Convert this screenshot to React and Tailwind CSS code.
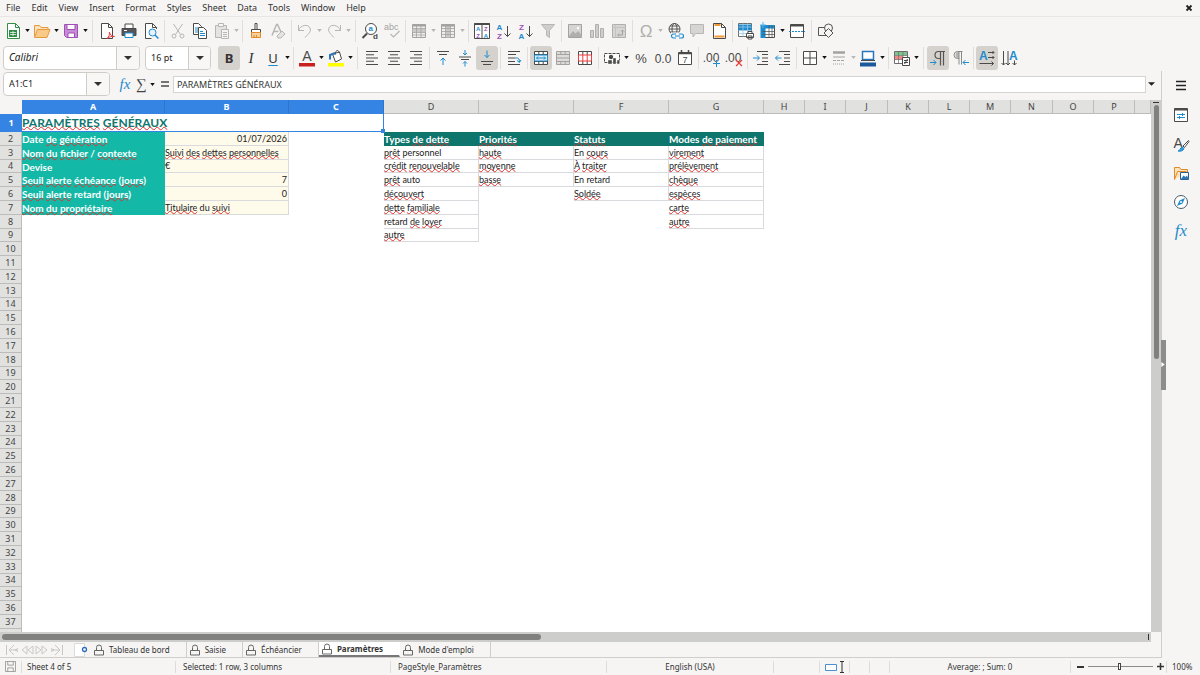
import React, { useState } from "react";

const DARK = "#4a4a48";
const DIM = "#b7b6b4";
const BLUE = "#1e8bcd";
const RED = "#ed3d3b";
const PURPLE = "#a04fb5";

const alignLines = (xs) =>
  xs.map(([x, w], i) => (
    <path key={i} d={`M${x} ${2.5 + i * 3.25}h${w}`} stroke={DARK} />
  ));

const icons = {
  newDoc: (
    <>
      <path d="M3.5 1.5h8l4 4v11h-12z" fill="#fff" stroke="#309048" />
      <path d="M11.5 1.5v4h4" fill="none" stroke="#309048" />
      <path d="M5 8h8v7H5z" fill="#309048" />
      <path d="M6 10.5h6M6 12.5h6M9 9v5" stroke="#fff" strokeWidth="0.7" />
    </>
  ),
  open: (
    <>
      <path d="M1.5 14.5v-11h5l1.5 2h7v3" fill="#fce3bd" stroke="#e59a3c" />
      <path d="M1.5 15.5l3-8h12.5l-3 8z" fill="#f9c98a" stroke="#e59a3c" />
    </>
  ),
  save: (
    <>
      <path d="M2.5 2.5h13v13h-11l-2-2z" fill="#c98ad6" stroke={PURPLE} />
      <path d="M5 2.5h8v5H5z" fill="#fff" stroke={PURPLE} />
      <path d="M6 11h6.5v4.5H6z" fill="#fff" stroke={PURPLE} />
    </>
  ),
  pdf: (
    <>
      <path d="M3.5 1.5h7l4 4v11h-11z" fill="#fff" stroke={DARK} />
      <path d="M10.5 1.5v4h4" fill="none" stroke={DARK} />
      <path d="M9 16.5c1.8-1.5 2.8-4 2.4-6.5.8 3 2.4 4.5 5.1 4.5-2.5-.5-5 .2-7.500 2z" fill="#fff" stroke={RED} />
    </>
  ),
  print: (
    <>
      <path d="M5 6V2h8v4" fill="#fff" stroke={DARK} />
      <path d="M2 6.5h14v7H2z" fill="#56565a" stroke={DARK} />
      <path d="M5 11h8v4.5H5z" fill="#fff" stroke={BLUE} />
      <path d="M4 8.5h3" stroke="#fff" />
    </>
  ),
  preview: (
    <>
      <path d="M14.5 7V5.5l-4-4h-7v15h6" fill="#fff" stroke={DARK} />
      <path d="M10.5 1.5v4h4" fill="none" stroke={DARK} />
      <circle cx="10.5" cy="10.5" r="3.5" fill="#e6f2fb" stroke={BLUE} />
      <path d="M13 13l3.5 3.5" stroke={BLUE} strokeWidth="1.5" />
    </>
  ),
  cut: (
    <g fill="none" stroke={DIM}>
      <path d="M4.5 2l7 10.5M13.5 2l-7 10.5" />
      <circle cx="5" cy="14" r="2" />
      <circle cx="13" cy="14" r="2" />
    </g>
  ),
  copy: (
    <>
      <path d="M2.5 1.5h5l3 3v8h-8z" fill="#fff" stroke={DARK} />
      <path d="M4 6h3M4 8h3M4 10h3" stroke={BLUE} />
      <path d="M7.5 5.5h5l3 3v8h-8z" fill="#fff" stroke={DARK} />
      <path d="M9 9.5h3M9 11.5h5M9 13.5h5" stroke={BLUE} />
    </>
  ),
  paste: (
    <>
      <path d="M2.5 3.5h11v12h-11z" fill="#e4e3e1" stroke={DIM} />
      <path d="M5.5 1.5h5v3h-5z" fill="#f6f5f4" stroke={DIM} />
      <path d="M8.5 7.5h7v9h-7z" fill="#f6f5f4" stroke={DIM} />
      <path d="M10 10.5h4M10 12.5h4M10 14.5h4" stroke={DIM} />
    </>
  ),
  clone: (
    <>
      <path d="M8 1.5h2v6H8z" fill="#fff" stroke={DARK} />
      <path d="M4.5 7.5h9v3h-9z" fill="#fff" stroke={DARK} />
      <path d="M4.5 10.5h9v5h-9z" fill="#fbd19b" stroke="#e08a2c" />
      <path d="M7 13v3M9.5 13v3" stroke="#e08a2c" />
    </>
  ),
  clear: (
    <>
      <path d="M3 13.5L7.5 2.5h1L12 10M4.5 9.5h5" fill="none" stroke={DIM} strokeWidth="1.5" />
      <path d="M8 14l5-5 3 3-4 4H9z" fill="#e4e3e1" stroke={DIM} />
    </>
  ),
  undo: <path d="M2.5 3v5.5H8M2.5 8.5c2-5.5 9.5-7 11.5-2.5 1.2 3-.5 5-5 9.5" fill="none" stroke={DIM} />,
  redo: <path d="M15.5 3v5.5H10M15.5 8.5c-2-5.5-9.5-7-11.5-2.5-1.2 3 .5 5 5 9.5" fill="none" stroke={DIM} />,
  find: (
    <>
      <circle cx="10" cy="7" r="5.5" fill="#fff" stroke={DARK} />
      <path d="M6 11.5L1.5 16" stroke={DARK} strokeWidth="2" />
      <text x="7.5" y="9" fontSize="8" fontWeight="bold" fill={BLUE}>a</text>
      <text x="12" y="17" fontSize="8" fontWeight="bold" fill={DARK}>d</text>
    </>
  ),
  spell: (
    <>
      <text x="1" y="8" fontSize="9" fill="#a3a2a0">abc</text>
      <path d="M7.5 12l3 3 6-6" fill="none" stroke={DIM} strokeWidth="1.2" />
    </>
  ),
  rowTable: (
    <>
      <path d="M2.5 2.5h13v13h-13z" fill="#efeeec" stroke="#a3a2a0" />
      <path d="M2.5 3.5h13" stroke="#a3a2a0" strokeWidth="2" />
      <path d="M2.5 8.5h13" stroke="#c9c8c6" strokeWidth="3" />
      <path d="M2.5 6.5h13M2.5 10.5h13M2.5 13h13M6.5 4v11.5M11 4v11.5" stroke="#a3a2a0" strokeWidth="0.8" />
    </>
  ),
  colTable: (
    <>
      <path d="M2.5 2.5h13v13h-13z" fill="#efeeec" stroke="#a3a2a0" />
      <path d="M9 4v11.5" stroke="#c9c8c6" strokeWidth="4" />
      <path d="M2.5 3.5h13" stroke="#a3a2a0" strokeWidth="2" />
      <path d="M2.5 6.5h13M2.5 9.5h13M2.5 12.5h13M6.5 4v11.5M11.5 4v11.5" stroke="#a3a2a0" strokeWidth="0.8" />
    </>
  ),
  sort: (
    <>
      <path d="M1.5 1.5h15v15h-15zM9 1.5v15" fill="#fff" stroke={DARK} />
      <path d="M1.5 2h15" stroke={DARK} strokeWidth="2" />
      <g fontSize="6" fontWeight="bold">
        <text x="3" y="8.5" fill={BLUE}>A</text>
        <text x="3.3" y="15.7" fill={PURPLE}>Z</text>
        <text x="11" y="8.5" fill={PURPLE}>Z</text>
        <text x="10.7" y="15.7" fill={BLUE}>A</text>
      </g>
    </>
  ),
  sortAsc: (
    <>
      <text x="1.5" y="7.5" fontSize="8" fontWeight="bold" fill={BLUE}>A</text>
      <text x="2" y="16.5" fontSize="8" fontWeight="bold" fill={PURPLE}>Z</text>
      <path d="M12.5 4v10.5M9.5 11.5l3 3 3-3" fill="none" stroke={DARK} />
    </>
  ),
  sortDesc: (
    <>
      <text x="2" y="7.5" fontSize="8" fontWeight="bold" fill={PURPLE}>Z</text>
      <text x="1.5" y="16.5" fontSize="8" fontWeight="bold" fill={BLUE}>A</text>
      <path d="M12.5 4v10.5M9.5 11.5l3 3 3-3" fill="none" stroke={DARK} />
    </>
  ),
  filter: <path d="M2.5 2.5h13l-5 6v7l-3-2v-5z" fill="#cfcecc" stroke={DIM} />,
  image: (
    <>
      <path d="M2.5 2.5h13v13h-13z" fill="#d6d5d3" stroke="#a3a2a0" />
      <path d="M3 14l4-5 2.5 2.5L12 9l3.5 4v2H3z" fill="#b0afad" />
      <circle cx="12" cy="6" r="1.2" fill="#fff" />
    </>
  ),
  chart: (
    <g fill="#cfcecc" stroke="#b0afad">
      <path d="M2.5 8.5h3v7h-3zM7.5 2.5h3v13h-3zM12.5 6.5h3v9h-3z" />
    </g>
  ),
  pivot: (
    <>
      <path d="M2.5 2.5h13v13h-13z" fill="#d6d5d3" stroke="#b0afad" />
      <path d="M2.5 5.5h13M5.5 2.5v13" stroke="#c4c3c1" />
      <path d="M8 13h4.5V8M11 9.5L12.5 8 14 9.5M9 11.5L7.500 13 9 14.500" fill="none" stroke="#a3a2a0" />
    </>
  ),
  omega: <text x="9" y="15" fontSize="17" textAnchor="middle" fill="#b0afad">Ω</text>,
  link: (
    <>
      <g fill="none" stroke={DARK} strokeWidth="0.9">
        <circle cx="8.5" cy="7" r="5.5" />
        <ellipse cx="8.5" cy="7" rx="2.5" ry="5.5" />
        <path d="M3 7h11M4 4h9M4 10h9" />
      </g>
      <path d="M5 10.5h13v7H5z" fill="#f6f5f4" />
      <path d="M10 16H7.5a2 2 0 010-4H10M13 12h2.5a2 2 0 010 4H13M9 14h5" fill="none" stroke={BLUE} strokeWidth="1.2" />
    </>
  ),
  comment: <path d="M2.5 2.5h13v9h-8l-2.5 3.5v-3.5H2.5z" fill="#d6d5d3" stroke={DIM} />,
  header: (
    <>
      <path d="M3.5 1.5h8l4 4v11h-12z" fill="#fff" stroke={DARK} />
      <path d="M11.5 1.5v4h4" fill="none" stroke={DARK} />
      <path d="M4.5 3h6M4.5 14.5h10" stroke="#f09a37" strokeWidth="2" />
    </>
  ),
  printArea: (
    <>
      <path d="M1.5 1.5h13v13h-13z" fill="#fff" stroke="#6d6d6b" />
      <path d="M1.5 2.5h13v6h-13z" fill={BLUE} />
      <path d="M1.5 5h13M1.5 8.5h13M1.5 11.5h13M6 1.5v13M10.5 1.5v13" stroke="#9ac6e8" strokeWidth="0.8" />
      <path d="M9.5 11.5h7v4h-7zM11 9.5h4v2h-4zM11 14h4v3h-4z" fill="#fff" stroke={DARK} />
    </>
  ),
  freeze: (
    <>
      <path d="M3.5 3.5h12v12h-12z" fill="#fff" stroke={DARK} />
      <path d="M1.5 3h14v3.5h-9v9.5h-5z" fill={BLUE} />
      <path d="M10 3.5v12M13 3.5v12M3.5 9.5h12M3.5 12.5h12" stroke={DARK} strokeWidth="0.7" />
      <path d="M4 0v6M1 3h6" stroke="#5bb0ea" />
    </>
  ),
  split: (
    <>
      <path d="M2.5 2.5h13v13h-13z" fill="#fff" stroke={DARK} />
      <path d="M2.5 3.5h13" stroke={DARK} strokeWidth="2" />
      <path d="M1 9.5h16" stroke={BLUE} strokeDasharray="2 1" />
    </>
  ),
  shapes: (
    <g fill="#f6f5f4" stroke="#555553">
      <path d="M1.5 5.5h8v8h-8z" />
      <circle cx="11.5" cy="6" r="4" />
      <path d="M11.5 6.5l4.5 4.5-4.5 4.5L7 11z" />
    </g>
  ),
  fontColor: (
    <>
      <text x="9" y="12" fontSize="14" textAnchor="middle" fill={DARK}>A</text>
      <path d="M1 14h16v3.5H1z" fill="#c9211e" />
    </>
  ),
  highlight: (
    <>
      <path d="M5.5 5l7-2 2 7-6 3z" fill="#fff" stroke={DARK} />
      <path d="M8 6c0-5 4-6 4-2" fill="none" stroke={DARK} />
      <path d="M3 10.5V6l5-2" fill="none" stroke="#2a76b8" strokeWidth="2" />
      <path d="M1 14h16v3.5H1z" fill="#ffff00" />
    </>
  ),
  left: alignLines([[3, 12], [3, 8], [3, 12], [3, 8], [3, 12]]),
  center: alignLines([[3, 12], [5, 8], [3, 12], [5, 8], [3, 12]]),
  right: alignLines([[3, 12], [7, 8], [3, 12], [7, 8], [3, 12]]),
  alignTop: (
    <>
      <path d="M3 2.5h12M5 5.5h8" stroke={DARK} />
      <path d="M9 16V9M6.5 11.5L9 9l2.5 2.5" fill="none" stroke={BLUE} />
    </>
  ),
  alignMiddle: (
    <>
      <path d="M3 8h12M5 10.5h8" stroke={DARK} />
      <path d="M9 1v5M7 4l2 2 2-2M9 17.5v-5M7 14.5l2-2 2 2" fill="none" stroke={BLUE} />
    </>
  ),
  alignBottom: (
    <>
      <path d="M3 12.5h12M5 15.5h8" stroke={DARK} />
      <path d="M9 1.5v7M6.5 6L9 8.5 11.5 6" fill="none" stroke={BLUE} />
    </>
  ),
  wrap: (
    <>
      <path d="M3 2.5h12M3 5.5h8M3 9h7M3 12.5h7M3 15.5h12" stroke={DARK} />
      <path d="M10 9h2.5q2 0 2 4M12 11.5l2.5 2 1.5-2.5" fill="none" stroke={BLUE} />
    </>
  ),
  mergeCenter: (
    <>
      <path d="M2.5 2.5h13v13h-13zM6.8 2.5v13M11.2 2.5v13M2.5 5.5h13M2.5 12.5h13" fill="#fff" stroke={DARK} />
      <path d="M2.5 6h13v6h-13z" fill="#d8ecfa" stroke={BLUE} />
      <path d="M4.5 9h9M6 7.5L4.5 9 6 10.5M12 7.5L13.5 9 12 10.5" fill="none" stroke={BLUE} />
    </>
  ),
  merge: (
    <path d="M2.5 2.5h13v13h-13zM6.8 2.5v3M11.2 2.5v3M6.8 12.5v3M11.2 12.5v3M2.5 5.5h13M2.5 12.5h13M2.5 9h13" fill="#dddcda" stroke="#a3a2a0" />
  ),
  unmerge: (
    <>
      <path d="M2.5 2.5h13v13h-13zM6.8 2.5v13M11.2 2.5v13" fill="#fff" stroke={DARK} />
      <path d="M2.5 6h13v6h-13zM6.8 6v6M11.2 6v6" fill="#fff" stroke={RED} />
    </>
  ),
  currency: (
    <>
      <path d="M1.5 4.5h15v9h-15z" fill="#fff" stroke={DARK} strokeDasharray="3 1" />
      <circle cx="8" cy="8" r="2.2" fill={DARK} />
      <path d="M5 11h4v4H5zM10 9h3v6h-3zM14 11h2.5v4H14z" fill={DARK} stroke="#fff" strokeWidth="0.4" />
    </>
  ),
  percent: <text x="9" y="14" fontSize="13" textAnchor="middle" fill={DARK}>%</text>,
  number: <text x="9" y="14" fontSize="12" textAnchor="middle" fill={DARK}>0.0</text>,
  date: (
    <>
      <path d="M2.5 3.5h13v12h-13z" fill="#fff" stroke={DARK} />
      <path d="M2.5 4.5h13M5.5 1v4M12.5 1v4" stroke={DARK} strokeWidth="1.5" />
      <text x="9" y="14" fontSize="9" textAnchor="middle" fill={DARK}>7</text>
    </>
  ),
  addDecimal: (
    <>
      <text x="8" y="13" fontSize="12" textAnchor="middle" fill={DARK}>.00</text>
      <path d="M13.5 11v7M10 14.5h7" stroke={BLUE} />
    </>
  ),
  delDecimal: (
    <>
      <text x="8" y="13" fontSize="12" textAnchor="middle" fill={DARK}>.00</text>
      <path d="M11 11l6 6M17 11l-6 6" stroke={RED} strokeWidth="1.2" />
    </>
  ),
  indent: (
    <>
      <path d="M5 2.5h11M10 5.5h6M10 9h6M10 12.5h6M5 15.5h11" stroke={DARK} />
      <path d="M1 9h6M5 6.5L7.5 9 5 11.5" fill="none" stroke={BLUE} />
    </>
  ),
  outdent: (
    <>
      <path d="M5 2.5h11M10 5.5h6M10 9h6M10 12.5h6M5 15.5h11" stroke={DARK} />
      <path d="M7.5 9h-6M4 6.5L1.5 9 4 11.5" fill="none" stroke={BLUE} />
    </>
  ),
  borders: (
    <>
      <path d="M2.5 2.5h13v13h-13z" fill="#fff" stroke={DARK} />
      <path d="M9 2.5v13M2.5 9h13" stroke={DARK} />
    </>
  ),
  lineStyle: (
    <g stroke="#a3a2a0">
      <path d="M3 3.5h12" strokeWidth="2.5" />
      <path d="M3 8h12" />
      <path d="M3 11.5h12" strokeDasharray="3 1" />
      <path d="M3 15h12" strokeDasharray="1 1" />
    </g>
  ),
  borderColor: (
    <>
      <path d="M3.5 2.5h11v8h-11z" fill="#fff" stroke="#2a76b8" strokeWidth="1.5" />
      <path d="M2 11.5h14" stroke={DARK} />
      <path d="M1 13.5h16v4H1z" fill="#1c5a9c" />
    </>
  ),
  conditional: (
    <>
      <path d="M1.5 2.5h13v12h-13z" fill="#fff" stroke="#6d6d6b" />
      <path d="M2 3h12v3.5H2z" fill="#7cc68d" />
      <path d="M2 7h8v3.5H2z" fill="#f08a84" />
      <path d="M5.5 2.5v12M10 2.5v12M1.5 6.5h13M1.5 10.5h13" stroke="#6d6d6b" strokeWidth="0.7" />
      <path d="M9.5 8.5h7v8h-7z" fill="#fff" stroke={DARK} />
      <path d="M11 11.5h4M11 13.5h4M14.5 10l-3 5" stroke={DARK} />
    </>
  ),
  ltr: (
    <>
      <path d="M16 2.5H9.5a3.5 3.5 0 000 7H11M11.5 2.5v14M14.5 2.5v14" fill="none" stroke="#555553" strokeWidth="1.2" />
      <path d="M1 13.5h6M4.5 11l2.5 2.5L4.500 16" fill="none" stroke={BLUE} />
    </>
  ),
  rtl: (
    <>
      <path d="M8 2.5a3.5 3.5 0 000 7z" fill="#b7b6b4" />
      <path d="M11.5 2.5H6.500a3.5 3.5 0 000 7H8M8 2.5v13M10.5 2.5v13" fill="none" stroke="#8a8a88" />
      <path d="M18 13.5h-6M14.5 11L12 13.5l2.5 2.5" fill="none" stroke={BLUE} />
    </>
  ),
  textLtr: (
    <>
      <text x="1" y="11" fontSize="12" fontWeight="bold" fill={BLUE}>A</text>
      <path d="M10 3.5h6M10 8.5h6M1.5 14.5h14M14.5 2L16 3.5 14.5 5M14.5 7L16 8.5 14.5 10M13.5 12.5l2 2-2 2" fill="none" stroke={DARK} />
    </>
  ),
  textTtb: (
    <>
      <path d="M3.5 2v14M1.5 14l2 2 2-2M8 2v14M6 14l2 2 2-2M14.5 11.5v4.5M12.5 14l2 2 2-2" fill="none" stroke={DARK} />
      <text x="9" y="11" fontSize="12" fontWeight="bold" fill={BLUE}>A</text>
    </>
  ),
  menu: <path d="M4 4.5h10M4 8.5h10M4 12.5h10" stroke="#222" strokeWidth="1.5" />,
  properties: (
    <>
      <path d="M2.5 2.5h13v13h-13z" fill="#fff" stroke={DARK} />
      <path d="M2.5 3.5h13" stroke={DARK} strokeWidth="2" />
      <path d="M5 8.5h8M5 11.5h8M10.5 7v3M7.5 10v3" stroke={BLUE} />
    </>
  ),
  styles: (
    <>
      <text x="1.5" y="12.5" fontSize="14" fill={DARK}>A</text>
      <path d="M16.5 5.5L11 11l1.5 1.5 4.5-6z" fill="#fff" stroke={DARK} />
      <path d="M6 16c2 0 2-3 4-4l2 1.5c-1 2.5-3 3-6 2.5z" fill="#3d9be0" stroke={BLUE} />
    </>
  ),
  gallery: (
    <>
      <path d="M2.5 15.5v-12h5l1.5 2h6.5v3M2.5 15.5l3-8h9" fill="#fce3bd" stroke="#e08a2c" />
      <path d="M8.5 8.5h8v7h-8z" fill="#fff" stroke="#2a5f8e" />
      <path d="M9 15l2.5-3.5 2 1.5 1.5-1.5 1.5 3.5z" fill="#2a76b8" />
    </>
  ),
  navigator: (
    <>
      <circle cx="9" cy="9" r="6.5" fill="#fff" stroke="#4b5a66" />
      <path d="M13 5l-2.5 5.5L5 13l2.5-5.5z" fill={BLUE} />
      <circle cx="9" cy="9" r="1" fill="#fff" />
    </>
  ),
};

function Icon({ name }) {
  return (
    <svg
      viewBox="0 0 18 18"
      className="h-[18px] w-[18px] overflow-visible font-['Liberation_Sans',sans-serif]"
      aria-hidden="true"
    >
      {icons[name]}
    </svg>
  );
}

function Caret({ dim }) {
  return (
    <svg viewBox="0 0 6 4" className="h-[3px] w-[5px]" aria-hidden="true">
      <path d="M0 0h6L3 4z" fill={dim ? DIM : "#111"} />
    </svg>
  );
}

// "|" and "||" are separators, "v" is an enabled drop-down arrow, "-v" a disabled one
const standardTools = [
  "newDoc", "v", "open", "v", "save", "v", "||",
  "pdf", "print", "preview", "|",
  "cut", "copy", "paste", "-v", "|",
  "clone", "clear", "|",
  "undo", "-v", "redo", "-v", "||",
  "find", "spell", "|",
  "rowTable", "-v", "colTable", "-v", "|",
  "sort", "sortAsc", "sortDesc", "filter", "|",
  "image", "chart", "pivot", "|",
  "omega", "-v", "link", "comment", "header", "|",
  "printArea", "freeze", "v", "split", "||",
  "shapes",
];

const formatTools = [
  "v", "|",
  "fontColor", "v", "highlight", "v", "||",
  "left", "center", "right", "|",
  "alignTop", "alignMiddle", "alignBottom", "|",
  "wrap", "|",
  "mergeCenter", "merge", "unmerge", "|",
  "currency", "v", "percent", "number", "date", "|",
  "addDecimal", "delDecimal", "|",
  "indent", "outdent", "|",
  "borders", "v", "lineStyle", "-v", "borderColor", "v", "|",
  "conditional", "v", "||",
  "ltr", "rtl", "|",
  "textLtr", "textTtb",
];

const pressed = ["alignBottom", "mergeCenter", "ltr", "textLtr"];

function Separator({ wide }) {
  return (
    <div className={`flex justify-center ${wide ? "w-[7px]" : "w-[5px]"}`}>
      <div className="h-[22px] w-px bg-[#e0dedb]" />
    </div>
  );
}

function ToolItems({ items }) {
  return items.map((item, i) => {
    if (item === "|" || item === "||") {
      return <Separator key={i} wide={item === "||"} />;
    }
    if (item === "v" || item === "-v") {
      return (
        <button key={i} aria-label="More options" className="flex h-6 w-[7px] items-center justify-center">
          <Caret dim={item === "-v"} />
        </button>
      );
    }
    return (
      <button
        key={i}
        aria-label={item}
        className={`flex h-6 w-[22px] items-center justify-center rounded-[3px] ${
          pressed.includes(item) ? "bg-[#d5d1cd]" : ""
        }`}
      >
        <Icon name={item} />
      </button>
    );
  });
}

function Combo({ label, value, width, arrowWidth, inputClass }) {
  return (
    <div className={`flex h-6 overflow-hidden rounded-[4px] border border-[#d0ccc8] bg-white ${width}`}>
      <input
        aria-label={label}
        defaultValue={value}
        className={`min-w-0 flex-1 pl-[5px] text-[#222] outline-none ${inputClass}`}
      />
      <button
        aria-label={`${label} list`}
        className={`flex items-center justify-center border-l border-[#d0ccc8] bg-[#f8f7f6] ${arrowWidth}`}
      >
        <svg viewBox="0 0 8 4" className="h-[4px] w-[8px]" aria-hidden="true">
          <path d="M0 0h8L4 4z" fill="#333" />
        </svg>
      </button>
    </div>
  );
}

const menus = [
  "File", "Edit", "View", "Insert", "Format", "Styles",
  "Sheet", "Data", "Tools", "Window", "Help",
];

function MenuBar() {
  return (
    <nav className="flex h-[17px] items-center gap-[11px] border-b border-[#e8e6e4] pl-[6px]">
      {menus.map((m) => (
        <button key={m} className="text-[9px] leading-4">
          {m}
        </button>
      ))}
      <button aria-label="Close document" className="ml-auto mr-[7px]">
        <svg viewBox="0 0 8 8" className="h-2 w-2" aria-hidden="true">
          <path d="M1.5 1.5l5 5M6.5 1.5l-5 5" stroke="#222" strokeWidth="1.8" />
        </svg>
      </button>
    </nav>
  );
}

function FormulaBar() {
  return (
    <div className="mb-[3px] flex h-[26px] items-center pl-[3px] pr-[4px]">
      <Combo label="Name Box" value="A1:C1" width="w-[107px]" arrowWidth="w-[23px]" inputClass="text-[9px]" />
      <div className="ml-[7px] flex items-center">
        <button aria-label="Function Wizard" className="w-4 text-center font-['Liberation_Serif'] text-[15px] leading-4 italic text-[#1e8bcd]">
          fx
        </button>
        <button aria-label="Select Function" className="w-4 text-center font-['Liberation_Serif'] text-[15px] leading-4 text-[#444]">
          ∑
        </button>
        <button aria-label="Function list" className="flex h-6 w-[7px] items-center justify-center">
          <Caret />
        </button>
        <button aria-label="Formula" className="flex w-[17px] justify-center">
          <svg viewBox="0 0 8 6" className="h-[6px] w-2" aria-hidden="true">
            <path d="M0 1h8M0 5h8" stroke={DARK} strokeWidth="1.5" />
          </svg>
        </button>
      </div>
      <input
        aria-label="Input line"
        defaultValue="PARAMÈTRES GÉNÉRAUX"
        className="h-[17px] min-w-0 flex-1 border border-[#d6d3d0] bg-white pl-[3px] text-[9px] text-[#333] outline-none"
      />
      <button aria-label="Expand formula bar" className="flex w-[11px] justify-center">
        <svg viewBox="0 0 8 4" className="h-[4px] w-[7px]" aria-hidden="true">
          <path d="M0 0h8L4 4z" fill="#222" />
        </svg>
      </button>
    </div>
  );
}

const columns = [
  ["A", "w-[143px]"], ["B", "w-[124px]"], ["C", "w-[95px]"], ["D", "w-[95px]"],
  ["E", "w-[95px]"], ["F", "w-[95px]"], ["G", "w-[95px]"], ["H", "w-[41px]"],
  ["I", "w-[41px]"], ["J", "w-[42px]"], ["K", "w-[41px]"], ["L", "w-[41px]"],
  ["M", "w-[41px]"], ["N", "w-[42px]"], ["O", "w-[41px]"], ["P", "w-[41px]"],
  ["", ""],
];

// words between underscores are flagged by the spell checker
const sheet = {
  A: ["Date _de_ _génération_", "_Nom_ _du_ _fichier_ / _contexte_", "Devise", "_Seuil_ _alerte_ _échéance_ (_jours_)", "_Seuil_ _alerte_ retard (_jours_)", "_Nom_ _du_ _propriétaire_"],
  B: ["01/07/2026", "_Suivi_ _des_ _dettes_ _personnelles_", "€", "7", "0", "_Titulaire_ du _suivi_"],
  D: ["Types _de_ _dette_", "_prêt_ personnel", "_crédit_ _renouvelable_", "_prêt_ auto", "_découvert_", "_dette_ _familiale_", "retard _de_ _loyer_", "_autre_"],
  E: ["_Priorités_", "_haute_", "_moyenne_", "_basse_"],
  F: ["_Statuts_", "En _cours_", "_À_ _traiter_", "En retard", "_Soldée_"],
  G: ["Modes _de_ _paiement_", "_virement_", "_prélèvement_", "_chèque_", "_espèces_", "_carte_", "_autre_"],
};

function Spelled({ text }) {
  return text.split("_").map((part, i) =>
    i % 2 === 1 ? (
      <span
        key={i}
        className="underline decoration-[#e0302c] decoration-wavy decoration-1 underline-offset-[-1px] [text-decoration-skip-ink:none]"
      >
        {part}
      </span>
    ) : (
      part
    )
  );
}

function Cell({ col, row }) {
  const text = sheet[col]?.[row - 2];
  if (text === undefined) return <td />;
  let style = "border-b border-r border-[#d9dade] text-[9px] text-[#222]";
  if (col === "A") style = "bg-[#14b8a6] text-[10px] font-bold text-white";
  else if (row === 2 && col !== "B") style = "bg-[#0f766e] text-[10px] font-bold text-white";
  else if (col === "B") style += " bg-[#fffbeb]";
  if (/^[\d/]+$/.test(text)) style += " text-right";
  return (
    <td className={`overflow-visible pr-px leading-[12px] whitespace-nowrap ${style}`}>
      <Spelled text={text} />
    </td>
  );
}

const rows = Array.from({ length: 36 }, (_, i) => i + 2);
const rowHeader = "border-r border-b border-[#bdbcba] bg-[#e1e1df] p-0";

function Spreadsheet() {
  return (
    <div className="min-h-0 min-w-0 flex-1 overflow-hidden bg-white">
      <table className="w-full table-fixed border-separate border-spacing-0 font-['Lato',sans-serif] text-[9px] leading-[12px]">
        <thead>
          <tr className="h-[14px] font-['Noto_Sans',sans-serif] text-[9px] text-[#444]">
            <td className="w-[22px] bg-[#f6f5f4]" />
            {columns.map(([name, width]) => (
              <th
                key={name}
                scope="col"
                className={`border-r border-b p-0 ${width} ${
                  ["A", "B", "C"].includes(name)
                    ? "border-r-[#2f74c8] border-b-[#3584e4] bg-[#3584e4] font-bold text-white"
                    : "border-[#bdbcba] bg-[#e1e1df] font-normal"
                }`}
              >
                {name}
              </th>
            ))}
          </tr>
        </thead>
        <tbody>
          <tr className="h-[18px]">
            <th scope="row" className="bg-[#3584e4] p-0 font-['Noto_Sans',sans-serif] text-[9px] font-bold text-white">
              1
            </th>
            <td
              colSpan={3}
              className="relative border-r border-b border-[#3584e4] text-[12px] leading-4 font-bold whitespace-nowrap text-[#0f766e]"
            >
              <Spelled text="_PARAMÈTRES_ _GÉNÉRAUX_" />
              <span className="absolute -right-[2px] -bottom-[2px] h-[4px] w-[4px] bg-[#3584e4]" />
            </td>
            <td colSpan={14} />
          </tr>
          {rows.map((row) => (
            <tr key={row} className={row % 5 === 4 ? "h-[13px]" : "h-[14px]"}>
              <th
                scope="row"
                className={`font-['Noto_Sans',sans-serif] text-[9px] font-normal text-[#444] ${rowHeader}`}
              >
                {row}
              </th>
              {columns.map(([name]) => (
                <Cell key={name} col={name} row={row} />
              ))}
            </tr>
          ))}
          <tr className="h-[14px]">
            <td className={rowHeader} />
            <td colSpan={17} />
          </tr>
        </tbody>
      </table>
    </div>
  );
}

function Lock() {
  return (
    <svg viewBox="0 0 10 12" className="h-3 w-[10px] shrink-0" aria-hidden="true">
      <path d="M0.5 6.5h9v4.5h-9zM2.5 6.5V3.5a2.5 2.5 0 015 0v3" fill="none" stroke="#666" />
    </svg>
  );
}

const tabs = ["Tableau de bord", "Saisie", "Échéancier", "Paramètres", "Mode d'emploi"];

const scrollArrows = [
  "M1.5 1v10M9 1L4 6l5 5M5 6h8M13 4.5L10 6l3 1.5",
  "M7 2L2 6l5 4zM13 2L8 6l5 4z",
  "M1 2l5 4-5 4zM7 2l5 4-5 4z",
  "M12.5 1v10M5 1l5 5-5 5M1 6h8M1 4.5L4 6 1 7.5",
];

function SheetTabs() {
  const [active, setActive] = useState("Paramètres");
  return (
    <div className="flex h-4 items-center border-b border-[#d0cecb] text-[8px]">
      <div className="ml-[5px] flex w-[66px] items-center">
        {scrollArrows.map((d, i) => (
          <button key={i} aria-label="Scroll sheets" className="w-[15px]">
            <svg viewBox="0 0 14 12" className="h-3 w-[14px]" aria-hidden="true">
              <path d={d} fill="none" stroke="#c9c7c4" />
            </svg>
          </button>
        ))}
      </div>
      <button aria-label="Add sheet" className="w-5 pl-[3px]">
        <svg viewBox="0 0 14 14" className="h-[14px] w-[14px]" aria-hidden="true">
          <path d="M0.5 0.5h10v13h-10z" fill="#fff" stroke="#dddbd8" />
          <circle cx="10.5" cy="6.5" r="2" fill="#fff" stroke="#2a6cc0" strokeWidth="1.3" />
        </svg>
      </button>
      {tabs.map((tab) => (
        <button
          key={tab}
          onClick={() => setActive(tab)}
          className={`flex h-[15px] items-center gap-[5px] border-r pl-[3px] pr-4 leading-3 ${
            tab === active
              ? "border-b-2 border-r-transparent border-b-[#77767b] bg-white font-bold"
              : "border-[#d0cecb]"
          }`}
        >
          <Lock />
          {tab}
        </button>
      ))}
    </div>
  );
}

function StatusBar() {
  const field = "flex h-3 items-center border-r border-[#dedcd9]";
  return (
    <footer className="grid h-[17px] grid-cols-[22px_154fr_215fr_216fr_167fr_46px_30px_20px_20px_181fr_96px_33px] items-center text-[8px]">
      <div className={`${field} justify-center`}>
        <svg viewBox="0 0 12 12" className="h-[11px] w-[11px]" aria-hidden="true">
          <path d="M0.5 0.5h11v11h-11zM3 0.5v4h6v-4M3 11.5v-4h6v4" fill="none" stroke="#999" />
        </svg>
      </div>
      <div className={`${field} pl-[5px]`}>Sheet 4 of 5</div>
      <div className={`${field} pl-[7px]`}>Selected: 1 row, 3 columns</div>
      <div className={`${field} pl-[7px]`}>PageStyle_Paramètres</div>
      <div className={`${field} justify-center`}>English (USA)</div>
      <div className={field} />
      <div className={`${field} justify-center`}>
        <svg viewBox="0 0 20 12" className="h-3 w-5" aria-hidden="true">
          <path d="M0.5 3.5h11v6h-11z" fill="#fff" stroke="#4a90d0" />
          <path d="M15 0.5h4M15 11.5h4M17 0.5v11" stroke="#333" />
        </svg>
      </div>
      <div className={field} />
      <div className={field} />
      <div className={`${field} justify-center`}>Average: ; Sum: 0</div>
      <div className={`${field} gap-[4px] pl-[6px]`}>
        <button aria-label="Zoom out" className="h-[2px] w-[7px] bg-[#333]" />
        <input
          type="range"
          aria-label="Zoom"
          defaultValue={48}
          className="h-px w-[65px] appearance-none bg-[#8a8a88] [&::-webkit-slider-thumb]:h-[7px] [&::-webkit-slider-thumb]:w-[3px] [&::-webkit-slider-thumb]:appearance-none [&::-webkit-slider-thumb]:border [&::-webkit-slider-thumb]:border-[#444] [&::-webkit-slider-thumb]:bg-white"
        />
        <button aria-label="Zoom in">
          <svg viewBox="0 0 7 7" className="h-[7px] w-[7px]" aria-hidden="true">
            <path d="M0 3.5h7M3.5 0v7" stroke="#333" strokeWidth="1.5" />
          </svg>
        </button>
      </div>
      <div className="pl-[5px]">100%</div>
    </footer>
  );
}

function Sidebar() {
  return (
    <aside className="relative flex w-[39px] flex-col items-center border-l border-[#d0cecb]">
      {["menu", "properties", "styles", "gallery", "navigator"].map((name) => (
        <button key={name} aria-label={name} className="flex h-[29px] w-full items-center justify-center">
          <Icon name={name} />
        </button>
      ))}
      <button aria-label="Functions" className="h-[29px] w-full font-['Liberation_Serif'] text-[17px] leading-5 italic text-[#1e8bcd]">
        fx
      </button>
      <button aria-label="Hide sidebar" className="absolute top-1/2 -left-px flex h-[50px] w-[5px] -translate-y-1/2 items-center bg-[#8d8d8b]">
        <svg viewBox="0 0 4 6" className="h-[5px] w-[4px]" aria-hidden="true">
          <path d="M0 0l4 3-4 3z" fill="#fff" />
        </svg>
      </button>
    </aside>
  );
}

export default function App() {
  return (
    <div className="flex h-screen flex-col overflow-hidden bg-[#f6f5f4] font-['Noto_Sans',sans-serif] text-[#333]">
      <MenuBar />
      <div className="flex h-[27px] items-center pl-[2px]">
        <ToolItems items={standardTools} />
      </div>
      <div className="flex h-[27px] items-center pl-[3px]">
        <Combo label="Font Name" value="Calibri" width="w-[137px]" arrowWidth="w-[23px]" inputClass="text-[10px] italic" />
        <div className="ml-[5px] mr-[7px]">
          <Combo label="Font Size" value="16 pt" width="w-[66px]" arrowWidth="w-[22px]" inputClass="text-[9px]" />
        </div>
        <button className="h-6 w-[22px] rounded-[3px] bg-[#d5d1cd] text-[13px] leading-6 font-bold">B</button>
        <button className="h-6 w-[22px] font-['Liberation_Serif'] text-[15px] leading-6 italic">I</button>
        <button className="h-6 w-[22px] text-[13px] leading-6 underline decoration-[#1e8bcd] underline-offset-2">U</button>
        <ToolItems items={formatTools} />
      </div>
      <div className="flex min-h-0 flex-1">
        <main className="flex min-w-0 flex-1 flex-col">
          <FormulaBar />
          <div className="flex min-h-0 flex-1">
            <Spreadsheet />
            <div className="flex w-[10px] flex-col items-center bg-[#cdcdcc] pt-[2px]">
              <div className="mb-[2px] h-px w-[6px] bg-[#333]" />
              <div className="h-[48%] w-[5px] rounded-full bg-[#80817f]" />
            </div>
          </div>
          <div className="mr-[10px] flex h-[10px] items-center bg-[#cdcdcc] px-[2px]">
            <div className="h-[6px] w-[47%] rounded-full bg-[#80817f]" />
            <div className="ml-auto h-[6px] w-px bg-[#333]" />
          </div>
          <SheetTabs />
        </main>
        <Sidebar />
      </div>
      <StatusBar />
    </div>
  );
}
